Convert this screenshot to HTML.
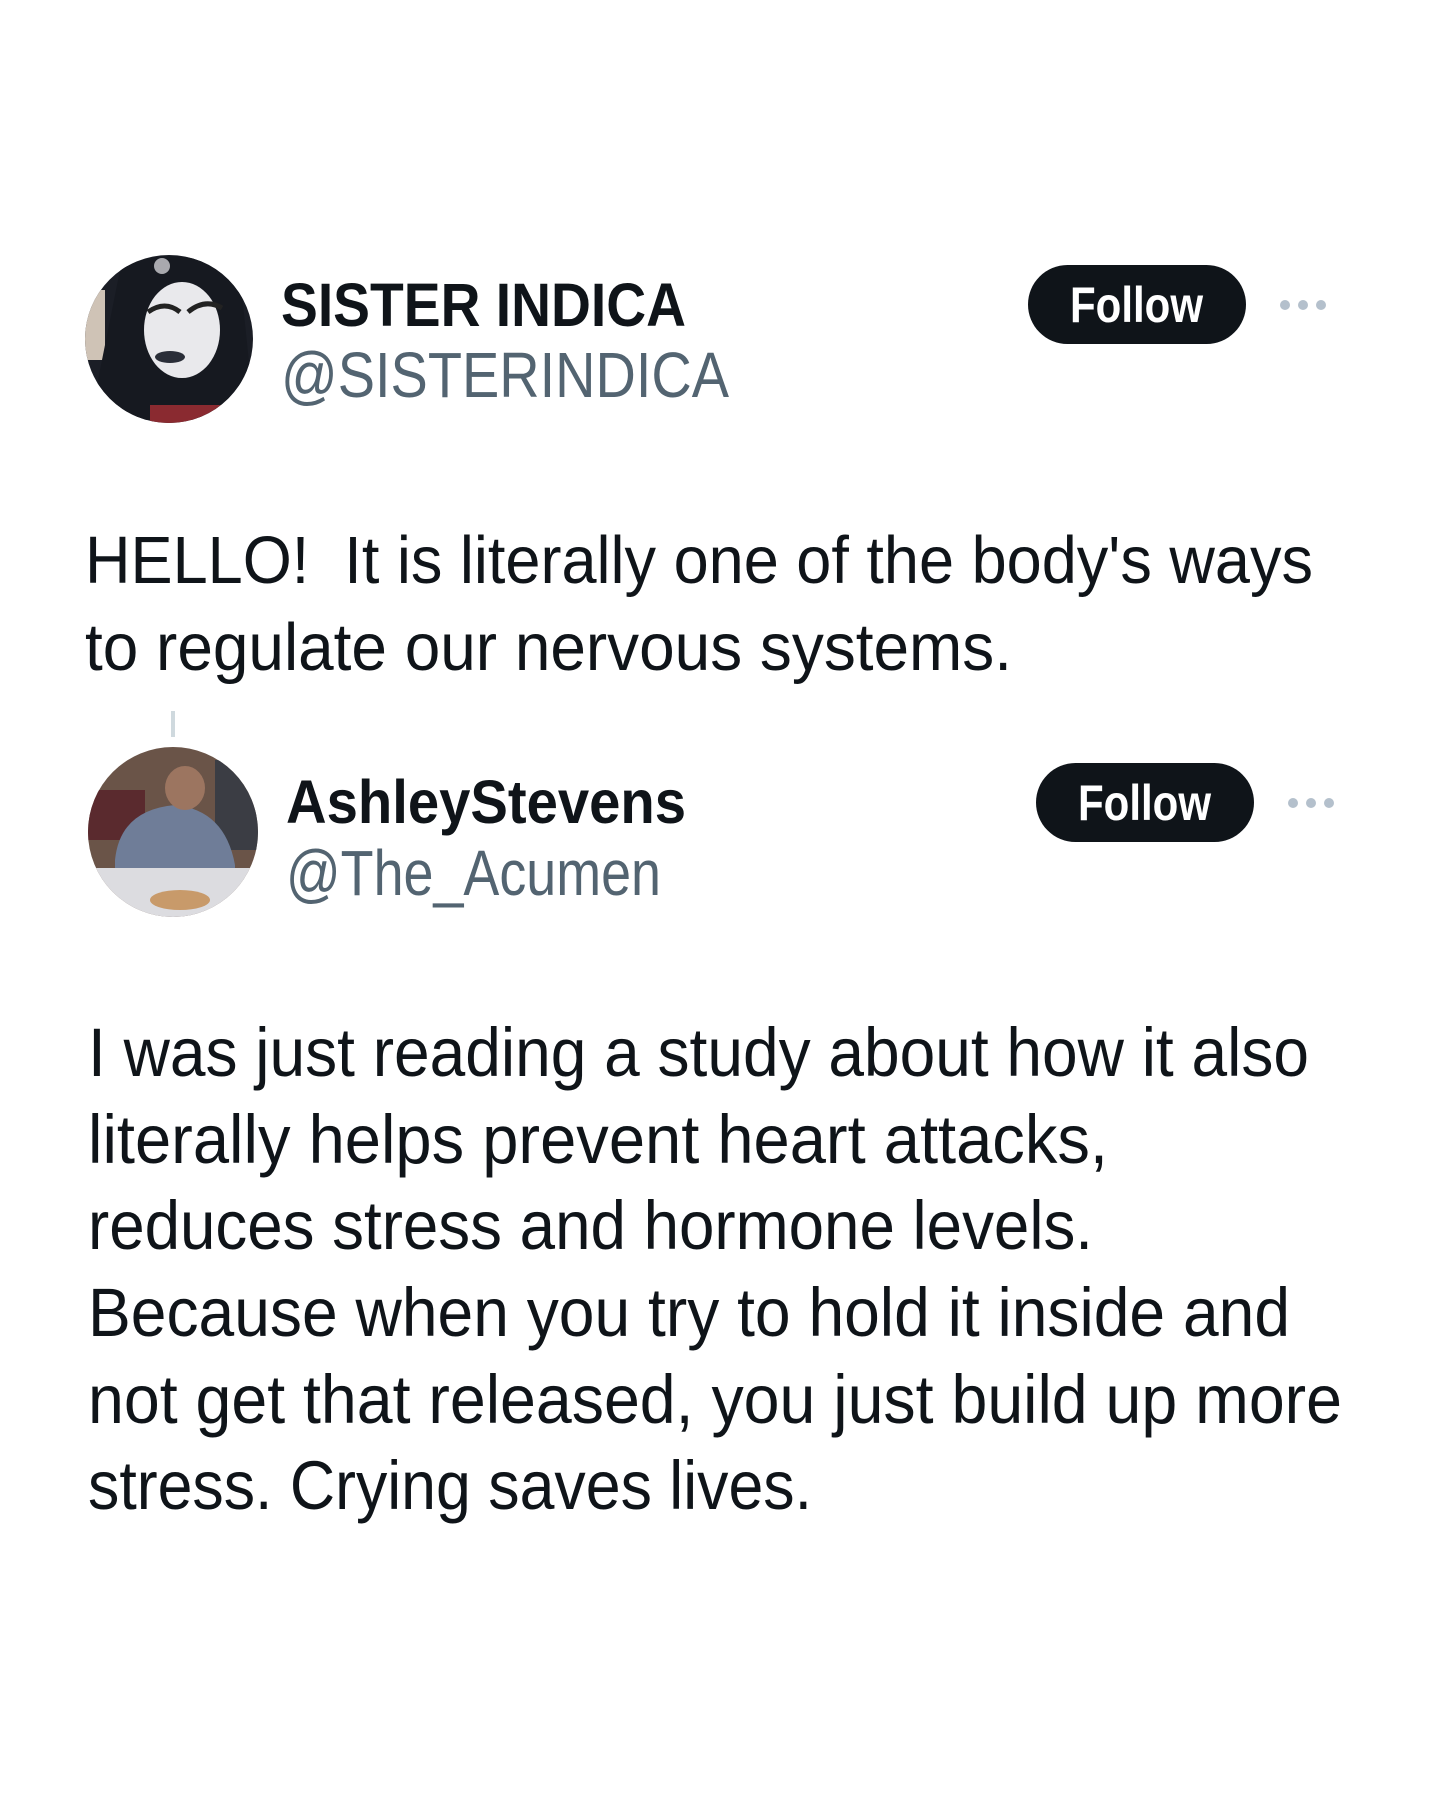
<!DOCTYPE html>
<html><head><meta charset="utf-8"><style>html,body{margin:0;padding:0;background:#fff;width:1440px;height:1800px;overflow:hidden}</style></head>
<body>
<svg width="1440" height="1800" viewBox="0 0 1440 1800" xmlns="http://www.w3.org/2000/svg" style="display:block">
<defs>
<clipPath id="c1"><circle cx="169" cy="339" r="84"/></clipPath>
<clipPath id="c2"><circle cx="173" cy="832" r="85"/></clipPath>
</defs>
<rect width="1440" height="1800" fill="#fff"/>
<g clip-path="url(#c1)">
<rect x="80" y="250" width="180" height="180" fill="#1b1e26"/>
<rect x="85" y="290" width="20" height="70" fill="#cfc3b6"/>
<path d="M120 270 Q170 240 240 275 L255 420 L90 420 Z" fill="#161920"/>
<ellipse cx="182" cy="330" rx="38" ry="48" fill="#e9e9ec"/>
<path d="M148 312 Q165 300 180 312" stroke="#222" stroke-width="5" fill="none"/>
<path d="M188 312 Q205 298 222 308" stroke="#222" stroke-width="5" fill="none"/>
<ellipse cx="170" cy="357" rx="15" ry="6" fill="#2a2e38"/>
<rect x="150" y="405" width="80" height="20" fill="#8a2a30"/>
<circle cx="162" cy="266" r="8" fill="#a9a9ae"/>
</g>
<g clip-path="url(#c2)">
<rect x="85" y="745" width="180" height="180" fill="#6a5448"/>
<rect x="85" y="790" width="60" height="50" fill="#5a2a2e"/>
<rect x="215" y="760" width="50" height="90" fill="#3b3d44"/>
<path d="M115 860 Q120 810 175 805 Q225 810 235 865 L235 870 L115 870 Z" fill="#6f7d98"/>
<ellipse cx="185" cy="788" rx="20" ry="22" fill="#9c7560"/>
<rect x="85" y="868" width="180" height="60" fill="#dcdce0"/>
<ellipse cx="180" cy="900" rx="30" ry="10" fill="#c89a6a"/>
</g>
<text x="281" y="326" font-family="Liberation Sans, sans-serif" font-weight="700" font-size="61" fill="#0f1419" textLength="405" lengthAdjust="spacingAndGlyphs">SISTER INDICA</text>
<text x="281" y="397" font-family="Liberation Sans, sans-serif" font-size="64" fill="#536471" textLength="448" lengthAdjust="spacingAndGlyphs">@SISTERINDICA</text>
<rect x="1028" y="265" width="218" height="79" rx="39.5" fill="#0f1419"/>
<text x="1070" y="322" font-family="Liberation Sans, sans-serif" font-weight="700" font-size="50" fill="#fff" textLength="133" lengthAdjust="spacingAndGlyphs">Follow</text>
<circle cx="1285" cy="305" r="5" fill="#b4c0cc"/><circle cx="1303" cy="305" r="5" fill="#b4c0cc"/><circle cx="1321" cy="305" r="5" fill="#b4c0cc"/>
<g font-family="Liberation Sans, sans-serif" font-size="67" fill="#0f1419">
<text x="85" y="583" textLength="1228" lengthAdjust="spacingAndGlyphs" xml:space="preserve">HELLO!  It is literally one of the body's ways</text>
<text x="85" y="670" textLength="927" lengthAdjust="spacingAndGlyphs">to regulate our nervous systems.</text>
</g>
<rect x="171" y="711" width="4" height="26" fill="#cfd9de"/>
<text x="286" y="823" font-family="Liberation Sans, sans-serif" font-weight="700" font-size="61" fill="#0f1419" textLength="400" lengthAdjust="spacingAndGlyphs">AshleyStevens</text>
<text x="286" y="895" font-family="Liberation Sans, sans-serif" font-size="64" fill="#536471" textLength="375" lengthAdjust="spacingAndGlyphs">@The_Acumen</text>
<rect x="1036" y="763" width="218" height="79" rx="39.5" fill="#0f1419"/>
<text x="1078" y="820" font-family="Liberation Sans, sans-serif" font-weight="700" font-size="50" fill="#fff" textLength="133" lengthAdjust="spacingAndGlyphs">Follow</text>
<circle cx="1293" cy="803" r="5" fill="#b4c0cc"/><circle cx="1311" cy="803" r="5" fill="#b4c0cc"/><circle cx="1329" cy="803" r="5" fill="#b4c0cc"/>
<g font-family="Liberation Sans, sans-serif" font-size="69" fill="#0f1419">
<text x="88" y="1076" textLength="1221" lengthAdjust="spacingAndGlyphs">I was just reading a study about how it also</text>
<text x="88" y="1163" textLength="1020" lengthAdjust="spacingAndGlyphs">literally helps prevent heart attacks,</text>
<text x="88" y="1249" textLength="1005" lengthAdjust="spacingAndGlyphs">reduces stress and hormone levels.</text>
<text x="88" y="1336" textLength="1202" lengthAdjust="spacingAndGlyphs">Because when you try to hold it inside and</text>
<text x="88" y="1423" textLength="1254" lengthAdjust="spacingAndGlyphs">not get that released, you just build up more</text>
<text x="88" y="1509" textLength="724" lengthAdjust="spacingAndGlyphs">stress. Crying saves lives.</text>
</g>
</svg>
</body></html>
